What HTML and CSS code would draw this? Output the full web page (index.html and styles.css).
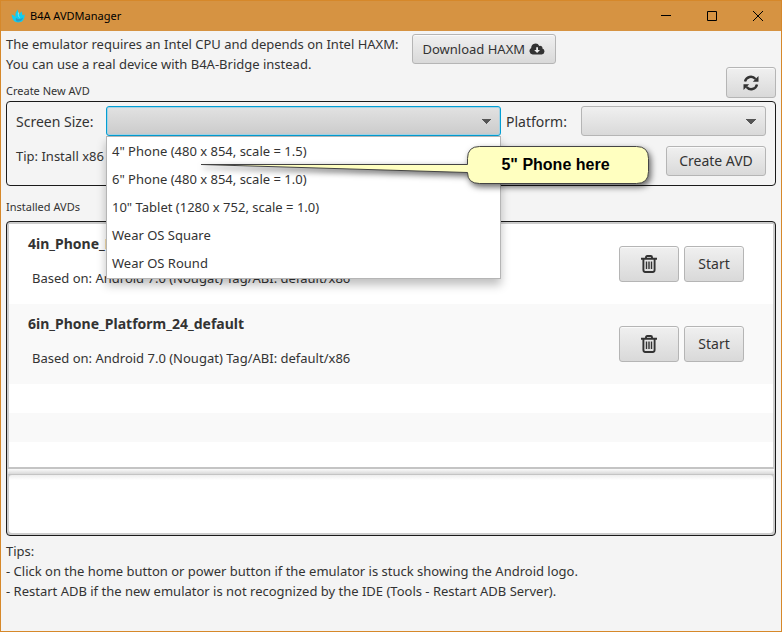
FILE: index.html
```html
<!DOCTYPE html>
<html lang="en">
<head>
  <meta charset="UTF-8">
  <meta name="viewport" content="width=device-width, initial-scale=1.0">
  <title>B4A AVDManager</title>
  <link rel="stylesheet" href="styles.css">
</head>
<body>
  <svg class="icon-defs" aria-hidden="true">
    <symbol id="icon-trash" viewBox="0 0 16 18">
      <path d="M0 3.800h16M5 3.800V2.200Q5 1 6.200 1h3.600Q11 1 11 2.200v1.600M2.400 4v10.800Q2.400 17 4.200 17h7.600q1.800 0 1.800-2.200V4" fill="none" stroke="#333" stroke-width="1.900"/>
      <path d="M5.500 6.500v7.500M8 6.500v7.500M10.500 6.500v7.500" stroke="#333" stroke-width="1.400"/>
    </symbol>
  </svg>

  <div class="window">
    <header class="titlebar">
      <svg class="app-icon" viewBox="0 0 14 14" aria-hidden="true">
        <path d="M.5 5.500C2.500 6 3.500 7 4.500 8C4 5 4.500 3 7 .5C7 3 7.500 4 8.500 5.500C8.800 4 9.500 3 11 2.500C10.600 4 11 5 12 6.500C13 5.800 13.400 5.500 13.800 5.500C13.500 8 13.200 10 11.500 12C9 14 5 13.800 3 12C1.500 10.500 1 8 .5 5.500Z" fill="#12cdf0"/>
        <path d="M5 9c2 1.500 4 1.500 7-.5-.5 3-3 4.500-6 4C5 12 4.500 10.500 5 9z" fill="#2a9cc4"/>
        <path d="M7.500 3.500C7 6 7.500 7.500 8.500 8.500" fill="none" stroke="#7debf7"/>
      </svg>
      <span class="title">B4A AVDManager</span>
      <div class="window-buttons">
        <button type="button" aria-label="Minimize"><svg viewBox="0 0 12 12"><path d="M1 5.500h10"/></svg></button>
        <button type="button" aria-label="Maximize"><svg viewBox="0 0 12 12"><path d="M1.500 1.500h9v9h-9z"/></svg></button>
        <button type="button" aria-label="Close"><svg viewBox="0 0 12 12"><path d="M1 1l10 10M11 1L1 11"/></svg></button>
      </div>
    </header>

    <main class="content">
      <div class="intro">
        <p>The emulator requires an Intel CPU and depends on Intel HAXM:<br>You can use a real device with B4A-Bridge instead.</p>
        <button type="button" class="btn btn-download">Download HAXM
          <svg class="cloud-icon" viewBox="0 0 16 12" aria-hidden="true">
            <path d="M3.700 11.500A3.500 3.500 0 0 1 2.200 5 4.300 4.300 0 0 1 10.300 2.900 2.300 2.300 0 0 1 13.400 5.500 3.100 3.100 0 0 1 12.700 11.500Z" fill="#333"/>
            <path d="M7.200 4.300h1.800v2.600h2L8.100 9.900 5.200 6.900h2z" fill="#eee"/>
          </svg>
        </button>
      </div>

      <div class="section-head">
        <h2>Create New AVD</h2>
        <button type="button" class="btn btn-refresh" aria-label="Refresh">
          <svg viewBox="0 0 16 16" aria-hidden="true">
            <path d="M2 6.500A6 6 0 0 1 12.500 4M14 9.500A6 6 0 0 1 3.500 12" fill="none" stroke="#333" stroke-width="2.400"/>
            <path d="M15.500 1v5.700H9.800zM.5 15V9.300h5.700z" fill="#333"/>
          </svg>
        </button>
      </div>

      <form class="panel create-form">
        <label for="screen-size">Screen Size:</label>
        <div class="combo">
          <select id="screen-size" class="select select-open"></select>
          <ul class="options" role="listbox" aria-label="Screen sizes">
            <li role="option">4" Phone (480 x 854, scale = 1.5)</li>
            <li role="option">6" Phone (480 x 854, scale = 1.0)</li>
            <li role="option">10" Tablet (1280 x 752, scale = 1.0)</li>
            <li role="option">Wear OS Square</li>
            <li role="option">Wear OS Round</li>
          </ul>
          <div class="callout">
            <svg viewBox="0 0 450 40" aria-hidden="true">
              <path d="M1 18.500L267.500 18.500V12.500Q267.500 .5 279.500 .5H436.500Q448.500 .5 448.500 12.500V25.500Q448.500 37.500 436.500 37.500H279.500Q267.500 37.500 267.500 26.500Z" fill="#ffffc0" stroke="#444"/>
            </svg>
            <span>5" Phone here</span>
          </div>
        </div>
        <label for="platform">Platform:</label>
        <select id="platform" class="select"></select>
        <p class="tip">Tip: Install x86</p>
        <button type="button" class="btn btn-create">Create AVD</button>
      </form>

      <h2 class="installed-title">Installed AVDs</h2>
      <section class="panel installed">
        <ul class="avd-list">
          <li class="avd">
            <div class="avd-info">
              <h3>4in_Phone_Platform_24_default</h3>
              <p>Based on: Android 7.0 (Nougat) Tag/ABI: default/x86</p>
            </div>
            <button type="button" class="btn btn-delete" aria-label="Delete"><svg><use href="#icon-trash"/></svg></button>
            <button type="button" class="btn btn-start">Start</button>
          </li>
          <li class="avd">
            <div class="avd-info">
              <h3>6in_Phone_Platform_24_default</h3>
              <p>Based on: Android 7.0 (Nougat) Tag/ABI: default/x86</p>
            </div>
            <button type="button" class="btn btn-delete" aria-label="Delete"><svg><use href="#icon-trash"/></svg></button>
            <button type="button" class="btn btn-start">Start</button>
          </li>
        </ul>
        <div class="splitter"></div>
        <textarea class="log" aria-label="Log" readonly></textarea>
      </section>

      <footer class="tips">
        <p>Tips:</p>
        <p>- Click on the home button or power button if the emulator is stuck showing the Android logo.</p>
        <p>- Restart ADB if the new emulator is not recognized by the IDE (Tools - Restart ADB Server).</p>
      </footer>
    </main>
  </div>
</body>
</html>
```
FILE: styles.css
```css
* {
  box-sizing: border-box;
}
body {
  margin: 0;
  background: #f4f4f4;
  color: #333;
  font-family: "Segoe UI", "Noto Sans", sans-serif;
  font-size: 13px;
  line-height: 20px;
}
h2, h3, p, ul {
  margin: 0;
  padding: 0;
}
ul {
  list-style: none;
}
h2 {
  font-size: 11px;
  font-weight: 400;
  line-height: 14px;
}
.icon-defs {
  display: none;
}
.window {
  min-height: 100vh;
  display: flex;
  flex-direction: column;
  border: 1px solid #d6882a;
}

/* Title bar */
.titlebar {
  display: flex;
  align-items: center;
  height: 30px;
  padding-left: 10px;
  background: #d69342;
  color: #000;
}
.app-icon {
  width: 14px;
  height: 14px;
  margin-right: 5px;
}
.title {
  flex: 1;
  font-size: 11px;
}
.window-buttons {
  display: flex;
}
.window-buttons button {
  width: 46px;
  height: 30px;
  padding: 0;
  border: none;
  background: none;
}
.window-buttons svg {
  display: block;
  width: 12px;
  height: 12px;
  margin: 0 auto;
  fill: none;
  stroke: #000;
}

/* Content */
.content {
  flex: 1;
  display: flex;
  flex-direction: column;
  padding: 3px 5px 30px;
}
.btn {
  height: 30px;
  padding: 0 10px;
  border: 1px solid #b5b5b5;
  border-radius: 3px;
  background: linear-gradient(#f0f0f0, #d9d9d9);
  box-shadow: inset 0 1px #fafafa;
  color: #333;
  font: inherit;
}
.btn svg {
  display: block;
  margin: 0 auto;
}
.intro {
  display: flex;
  align-items: flex-start;
  gap: 13px;
  min-height: 41px;
}
.btn-download {
  display: flex;
  align-items: center;
  gap: 4px;
}
.cloud-icon {
  width: 16px;
  height: 12px;
}
.section-head {
  display: flex;
  align-items: flex-end;
  justify-content: space-between;
  margin: -8px 0 3px;
}
.btn-refresh {
  width: 50px;
  height: 31px;
}
.btn-refresh svg {
  width: 16px;
  height: 16px;
}
.panel {
  border: 1px solid #1a1a1a;
  border-radius: 4px;
}

/* Create form */
.create-form {
  display: grid;
  grid-template-columns: 85px 1fr 70px 185px;
  grid-template-rows: 30px 30px;
  row-gap: 10px;
  column-gap: 5px;
  padding: 4px 9px 9px;
}
.create-form label {
  font-size: 14px;
  line-height: 32px;
}
.combo {
  position: relative;
}
/* the arrow is a wedge of the conic gradient */
.select {
  display: block;
  width: 100%;
  height: 30px;
  padding: 0 8px;
  border: 1px solid #b5b5b5;
  border-radius: 3px;
  appearance: none;
  background: conic-gradient(from -45deg at 50% 100%, #555 90deg, transparent 0) no-repeat right 9px center / 10px 5px, linear-gradient(#f0f0f0, #d9d9d9);
}
.select-open {
  border-color: #039ed3;
  box-shadow: inset 0 0 0 1px #a5d3e5;
  background: conic-gradient(from -45deg at 50% 100%, #555 90deg, transparent 0) no-repeat right 9px center / 10px 5px, linear-gradient(#e2e2e2, #cbcbcb);
}
.options {
  position: absolute;
  z-index: 1;
  top: 30px;
  left: 0;
  right: 0;
  padding: 0 5px 1px;
  border: 1px solid #b5b5b5;
  background: #fff;
  box-shadow: 0 6px 9px rgba(0, 0, 0, 0.25);
}
.options li {
  line-height: 28px;
}
.callout {
  position: absolute;
  z-index: 2;
  top: 40px;
  left: 94px;
  width: 450px;
  height: 40px;
  padding: 0 6px 0 267px;
  color: #000;
  font: bold 16px/38px "Liberation Sans", Arial, sans-serif;
  text-align: center;
}
.callout svg {
  position: absolute;
  top: 0;
  left: 0;
  width: 450px;
  height: 40px;
  overflow: visible;
  filter: drop-shadow(2px 3px 3px rgba(0, 0, 0, 0.6));
}
.callout span {
  position: relative;
}
.tip {
  grid-column: 1 / 3;
}
.btn-create {
  grid-column: 4;
  justify-self: end;
  width: 100px;
}

/* Installed AVDs */
.installed-title {
  margin: 14px 0 7px;
}
.installed {
  flex: 1;
  display: flex;
  flex-direction: column;
  padding: 2px 1px 1px;
  overflow: hidden;
  background: #ccc;
}
.avd-list {
  flex: 1;
  margin: 0 1px;
  background: repeating-linear-gradient(#fff 0 29px, #f9f9f9 29px 58px) 0 160px no-repeat, #fff;
}
.avd {
  display: flex;
  align-items: flex-start;
  gap: 5px;
  height: 80px;
  padding: 22px 29px 0 19px;
  background: #fff;
}
.avd:nth-child(even) {
  background: #f9f9f9;
}
.avd-info {
  flex: 1;
  margin-top: -12px;
}
.avd h3 {
  font-size: 14px;
}
.avd p {
  padding: 14px 0 0 4px;
}
.btn-delete, .btn-start {
  width: 60px;
  height: 36px;
}
.btn-start, .btn-create {
  font-size: 14px;
}
.btn-delete svg {
  width: 16px;
  height: 18px;
}
.splitter {
  height: 8px;
  border: solid #c4c4c4;
  border-width: 2px 0 1px;
  background: linear-gradient(#fafafa, #d9d9d9);
}
.log {
  display: block;
  height: 58px;
  margin: 0 1px 1px;
  border: none;
  border-radius: 3px;
  outline: none;
  resize: none;
  background: linear-gradient(#eee, #fff 5px);
}

.tips {
  padding-top: 5px;
}
```
